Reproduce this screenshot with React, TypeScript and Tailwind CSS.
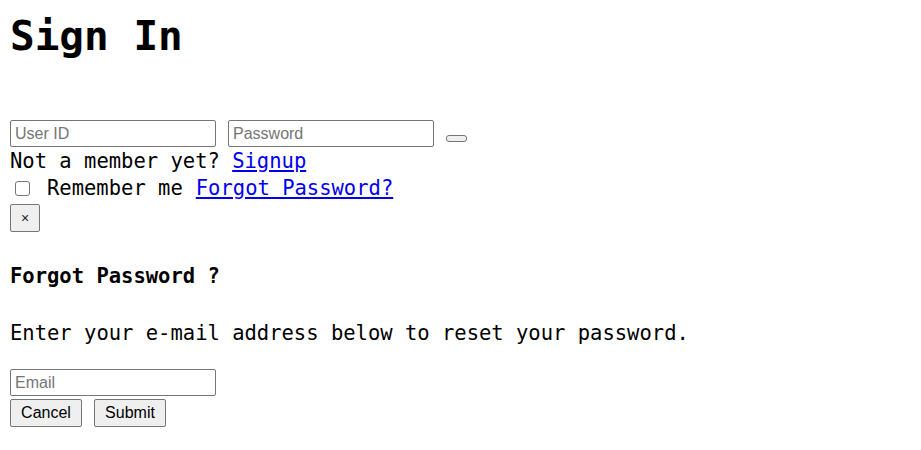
import React from 'react';

const mono = "font-['DejaVu_Sans_Mono',monospace]";
const ui = "font-['Liberation_Sans',Arial,sans-serif]";

const inputCls = `${ui} h-[27px] w-[206px] rounded-[2px] border border-[#767676] bg-white px-[4px] text-[16px] text-black placeholder:text-[#757575] outline-none`;
const btnCls = `${ui} h-[28px] rounded-[2px] border border-[#767676] bg-[#efefef] text-[16px] text-black`;

export default function App() {
  return (
    <div className={`${mono} min-h-[450px] w-[921px] bg-white px-[10px] text-[20.5px] text-black`}>
      <h1 className="pt-[12px] text-[41px] leading-[48px] font-bold">Sign In</h1>

      {/* login form */}
      <div className="mt-[60px] flex items-end gap-[12px]">
        <input className={inputCls} placeholder="User ID" />
        <input className={inputCls} placeholder="Password" />
        <button className="mb-[5px] h-[7px] w-[21px] rounded-[3px] border border-[#767676] bg-[#efefef]" />
      </div>
      <div className="mt-[1px] leading-[27px]">
        Not a member yet?{' '}
        <a href="#" className="text-[#0000ee] underline">Signup</a>
      </div>
      <div className="flex items-center leading-[27px]">
        <input type="checkbox" className="ml-[5px] block h-[15px] w-[15px] shrink-0 appearance-none rounded-[3px] border border-[#767676] bg-white" />
        <span className="ml-[17px]">Remember me</span>
        <a href="#" className="ml-[13px] text-[#0000ee] underline">Forgot Password?</a>
      </div>
      <button className={`${ui} mt-[2px] flex h-[28px] w-[30px] items-center justify-center rounded-[2px] border border-[#767676] bg-[#efefef] text-[14px] text-[#222]`}>
        ×
      </button>

      {/* forgot password */}
      <h4 className="mt-[32px] leading-[25px] font-bold">Forgot Password ?</h4>
      <p className="mt-[32px] leading-[25px]">Enter your e-mail address below to reset your password.</p>
      <input className={`${inputCls} mt-[23px] block`} placeholder="Email" />
      <div className="mt-[3px] flex gap-[12px]">
        <button className={`${btnCls} w-[72px]`}>Cancel</button>
        <button className={`${btnCls} w-[72px]`}>Submit</button>
      </div>
    </div>
  );
}
